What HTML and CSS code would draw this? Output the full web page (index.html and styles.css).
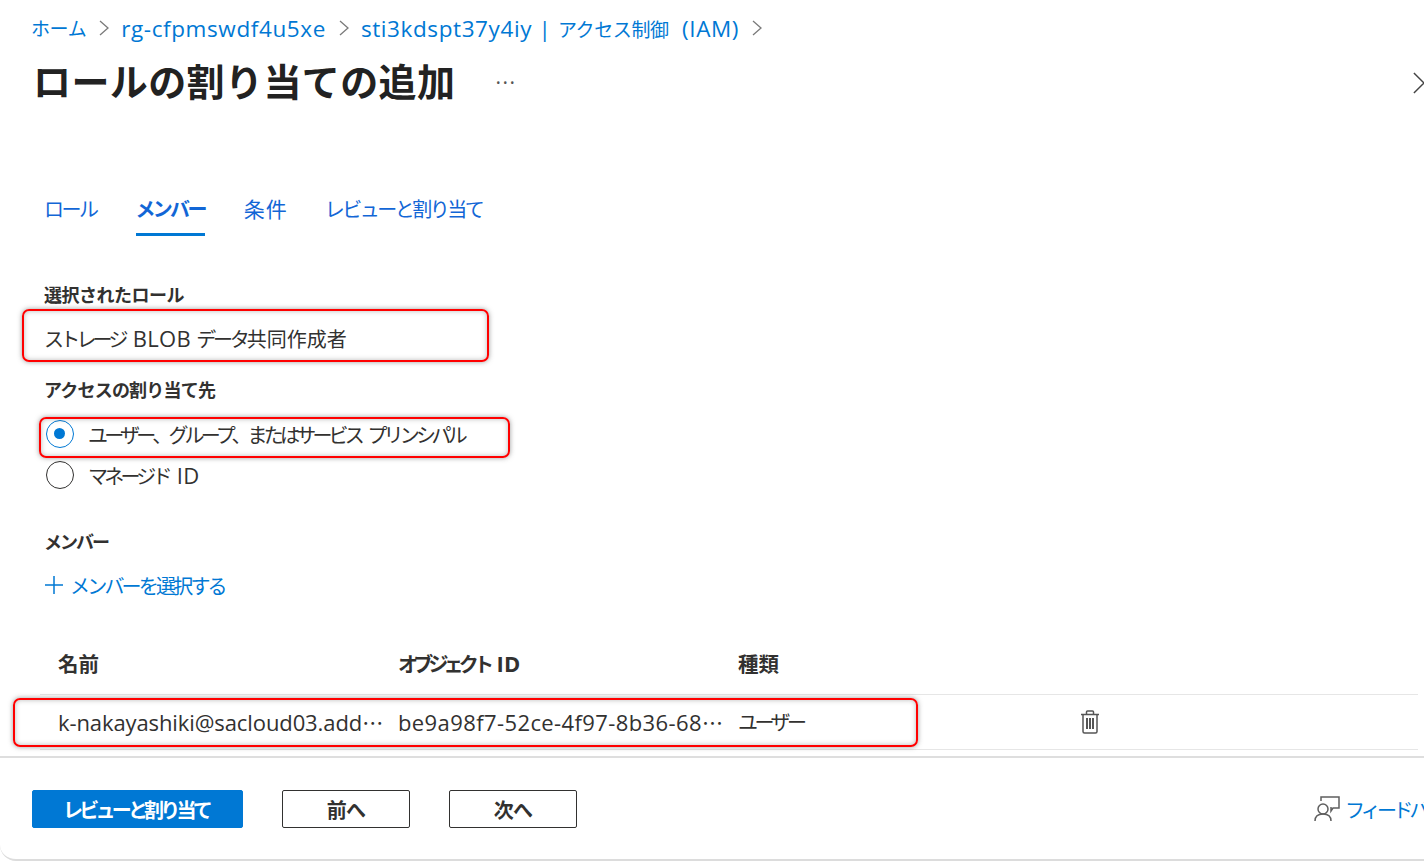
FILE: index.html
```html
<!DOCTYPE html>
<html lang="ja">
<head>
<meta charset="utf-8">
<title>ロールの割り当ての追加</title>
<link rel="stylesheet" href="styles.css">
</head>
<body>
<div class="page">
  <main class="main">
    <nav class="crumbs">
      <a class="ja">ホーム</a>
      <svg class="chev" viewBox="0 0 10 16"><path d="M1 1l8 7-8 7"/></svg>
      <a>rg-cfpmswdf4u5xe</a>
      <svg class="chev" viewBox="0 0 10 16"><path d="M1 1l8 7-8 7"/></svg>
      <a>sti3kdspt37y4iy | <span class="ja spaced">アクセス制御</span> (IAM)</a>
      <svg class="chev" viewBox="0 0 10 16"><path d="M1 1l8 7-8 7"/></svg>
    </nav>
    <header class="title-row">
      <h1>ロールの割り当ての追加</h1>
      <span class="more">···</span>
      <svg class="close" viewBox="0 0 24 24"><path d="M1 1l11 11L1 23"/><path d="M23 1L12 12l11 11"/></svg>
    </header>
    <div class="tabs">
      <a class="tab">ロール</a>
      <a class="tab active">メンバー</a>
      <a class="tab wide">条件</a>
      <a class="tab last">レビューと割り当て</a>
    </div>
    <section class="fields">
      <div class="label first">選択されたロール</div>
      <div class="value"><span class="kana">ストレージ</span> <span class="en">BLOB</span> <span class="kana data">データ</span>共同作成者</div>
      <div class="label access">アクセスの割り当て先</div>
      <div class="radios">
        <div class="radio"><span class="dot on"></span><span class="kana words">ユーザー、グループ、またはサービス プリンシパル</span></div>
        <div class="radio"><span class="dot"></span><span><span class="kana">マネージド</span> <span class="en">ID</span></span></div>
      </div>
      <div class="label member">メンバー</div>
      <a class="add"><svg viewBox="0 0 20 20"><path d="M10 1v18M1 10h18"/></svg>メンバーを選択する</a>
    </section>
    <section class="table">
      <div class="thead"><span>名前</span><span><span class="kana-tight">オブジェクト</span> <span class="en">ID</span></span><span>種類</span></div>
      <div class="trow">
        <span class="cell name">k-nakayashiki@sacloud03.add<span class="dots">⋯</span></span>
        <span class="cell id">be9a98f7-52ce-4f97-8b36-68<span class="dots">⋯</span></span>
        <span class="cell kind">ユーザー</span>
        <svg class="trash" viewBox="0 0 20 24"><path d="M1 4.500h18M6.500 4.500V2a1 1 0 0 1 1-1h5a1 1 0 0 1 1 1v2.500M3 4.500V21.500a1.500 1.500 0 0 0 1.500 1.500h11a1.500 1.500 0 0 0 1.500-1.500V4.500"/><path class="bars" d="M7 8v11M10 8v11M13 8v11"/></svg>
      </div>
    </section>
  </main>
  <footer class="footer">
    <button class="btn primary">レビューと割り当て</button>
    <button class="btn prev">前へ</button>
    <button class="btn next">次へ</button>
    <a class="feedback">
      <svg viewBox="0 0 26 26"><circle cx="9" cy="13" r="5"/><path d="M1 25c0-5 3-7 8-7s8 2 8 7"/><path d="M7 5V1h18v11h-6l-2 3v-4"/></svg>
      <span>フィードバック</span>
    </a>
  </footer>
  <div class="mark mark-role"></div>
  <div class="mark mark-radio"></div>
  <div class="mark mark-row"></div>
</div>
</body>
</html>
```
FILE: styles.css
```css
* { box-sizing: border-box; }
html, body { margin: 0; height: 100%; overflow: hidden; background: #fff; }
body {
  font-family: "Open Sans", "Noto Sans CJK JP", sans-serif;
  color: #323130;
}
.page {
  position: relative;
  width: 1424px;
  height: 861px;
  display: flex;
  flex-direction: column;
  overflow: hidden;
  border-bottom: 2px solid #dcdcdc;
  border-bottom-left-radius: 16px;
}
.main { flex: 1; min-height: 0; }
.crumbs {
  height: 30px;
  margin-top: 13px;
  padding-left: 31px;
  display: flex;
  align-items: center;
  font-size: 22.500px;
  letter-spacing: 0.600px;
  color: #0078d4;
  white-space: nowrap;
}
.crumbs .ja { font-size: 19px; letter-spacing: -0.400px; }
.crumbs .spaced { margin-right: 7px; }
.chev { width: 10px; height: 16px; margin: 0 12px 0 13px; fill: none; stroke: #7a7a7a; stroke-width: 1.300; flex: none; }
.title-row {
  position: relative;
  height: 50px;
  margin-top: 14px;
  padding-left: 33px;
  display: flex;
  align-items: center;
}
h1 { margin: 0 0 1px; font-size: 38px; font-weight: 700; color: #222; line-height: 47px; letter-spacing: 0.400px; }
.more { margin-left: 40px; font-size: 21px; color: #555; letter-spacing: 1.500px; }
.close { position: absolute; right: -11px; top: 15px; width: 22px; height: 22px; fill: none; stroke: #444; stroke-width: 1.600; }
.tabs {
  margin-top: 79px;
  padding-left: 44px;
  display: flex;
  gap: 39px;
  height: 50px;
  font-size: 20px;
  color: #1266d6;
  letter-spacing: -2.500px;
}
.tab { height: 50px; line-height: 46px; padding-top: 1px; white-space: nowrap; }
.tab.wide { font-size: 21px; letter-spacing: 1px; line-height: 44px; }
.tab.last { margin-left: -2px; }
.tab.active { font-weight: 700; border-bottom: 3px solid #0078d4; letter-spacing: -2.700px; }
.fields { padding-left: 44px; }
.label { font-size: 18px; font-weight: 700; line-height: 28px; letter-spacing: -0.800px; color: #323130; }
.label.first { margin-top: 45px; letter-spacing: -0.500px; }
.value { margin-top: 15px; height: 30px; line-height: 28px; font-size: 20px; white-space: nowrap; }
.kana { letter-spacing: -3.800px; }
.kana.data { letter-spacing: -3.200px; }
.kana.words { word-spacing: 5px; }
.en { font-size: 22px; letter-spacing: 0.300px; margin-left: 3px; }
.label.access { margin-top: 22px; }
.radios { margin-top: 16px; margin-left: 2px; }
.radio { display: flex; align-items: center; gap: 14px; height: 28px; margin-bottom: 13px; font-size: 20px; white-space: nowrap; }
.dot { width: 28px; height: 28px; border-radius: 50%; border: 1.500px solid #323130; flex: none; position: relative; }
.dot.on { border-color: #0078d4; }
.dot.on::after { content: ""; position: absolute; left: 7px; top: 7px; width: 11px; height: 11px; border-radius: 50%; background: #0078d4; }
.label.member { margin-top: 39px; letter-spacing: -2px; }
.add { display: flex; align-items: center; gap: 6px; margin-top: 14px; height: 30px; font-size: 20px; color: #0078d4; letter-spacing: -2.800px; }
.add svg { width: 20px; height: 20px; fill: none; stroke: #0078d4; stroke-width: 1.500; }
.table { margin-top: 38px; margin-left: 40px; width: 1378px; }
.thead, .trow {
  display: grid;
  grid-template-columns: 340px 340px 342px 1fr;
  padding-left: 18px;
  align-items: center;
}
.thead { height: 57px; padding-bottom: 7px; font-size: 20.500px; font-weight: 700; border-bottom: 1px solid #e6e6e6; white-space: nowrap; }
.thead .en { margin-left: 2px; }
.kana-tight { letter-spacing: -4.800px; font-size: 20px; }
.trow { height: 55px; padding-bottom: 1px; font-size: 22px; border-bottom: 1px solid #e6e6e6; }
.cell { white-space: nowrap; overflow: hidden; }
.cell.name { letter-spacing: -0.100px; }
.cell.id { letter-spacing: 0.400px; }
.cell.kind { font-size: 20px; letter-spacing: -3.500px; }
.dots { font-family: "Noto Sans CJK JP", sans-serif; font-size: 21px; letter-spacing: 0; }
.trash { width: 20px; height: 24px; fill: none; stroke: #555; stroke-width: 1.500; }
.trash .bars { stroke-width: 2; }
.footer {
  height: 103px;
  border-top: 2px solid #dedede;
  padding-top: 32px;
  padding-left: 32px;
  display: flex;
  align-items: flex-start;
  position: relative;
}
.btn {
  height: 38px;
  border-radius: 2px;
  font: inherit;
  font-size: 20px;
  font-weight: 700;
  letter-spacing: -0.800px;
  background: #fff;
  border: 1px solid #323130;
  color: #323130;
  padding: 0;
  flex: none;
}
.btn.primary { width: 211px; padding-right: 3px; background: #0078d4; border-color: #0078d4; color: #fff; letter-spacing: -3.800px; }
.btn.prev { width: 128px; margin-left: 39px; }
.btn.next { width: 128px; margin-left: 39px; }
.feedback {
  margin-left: 737px;
  display: flex;
  align-items: center;
  gap: 5px;
  height: 38px;
  flex: none;
  font-size: 20px;
  color: #0078d4;
  letter-spacing: -3.800px;
  white-space: nowrap;
}
.feedback svg { width: 26px; height: 26px; fill: none; stroke: #5f5f5f; stroke-width: 1.500; }
.mark {
  position: absolute;
  border: 2px solid #f00;
  border-radius: 7px;
  box-shadow: 0 0 5px rgba(60, 60, 60, 0.500), inset 0 0 5px rgba(60, 60, 60, 0.350);
}
.mark-role { left: 22px; top: 309px; width: 467px; height: 53px; }
.mark-radio { left: 39px; top: 417px; width: 471px; height: 41px; }
.mark-row { left: 13px; top: 698px; width: 905px; height: 49px; }
```
